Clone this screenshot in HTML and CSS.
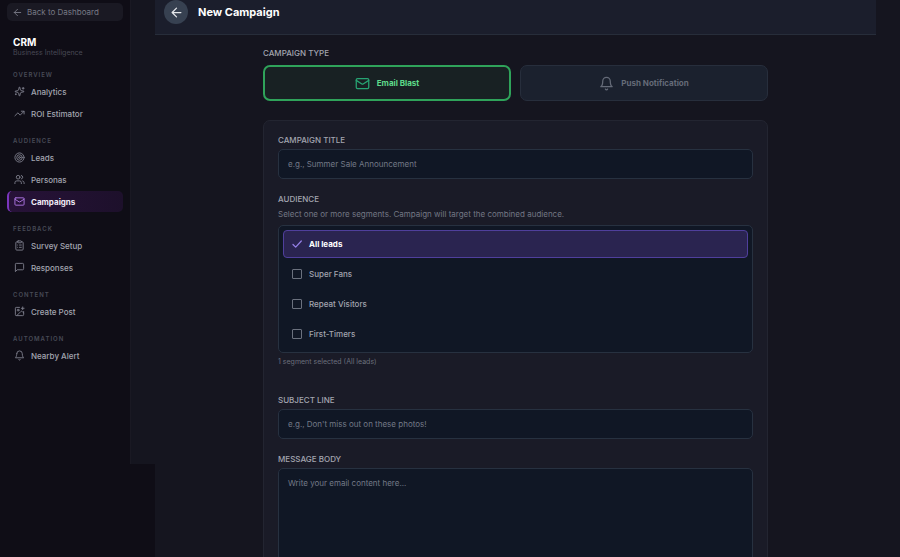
FILE: index.html
```
<!DOCTYPE html>
<html lang="en">
<head>
  <meta charset="utf-8">
  <meta name="viewport" content="width=device-width, initial-scale=1">
  <title>New Campaign</title>
  <link rel="stylesheet" href="styles.css">
</head>
<body>
  <div class="layout">
    <aside class="sidebar">
      <a class="back-link" href="#">
        <svg class="icon" viewBox="0 0 24 24"><path d="m12 19-7-7 7-7M19 12H5"/></svg>
        Back to Dashboard
      </a>
      <div class="brand">
        <div class="brand-name">CRM</div>
        <div class="brand-sub">Business Intelligence</div>
      </div>

      <nav>
        <div class="nav-section">
          <div class="nav-label">OVERVIEW</div>
          <a class="nav-item" href="#">
            <svg class="icon" viewBox="0 0 24 24"><path d="M9.94 15.5A2 2 0 0 0 8.5 14.06l-6.14-1.58a.5.5 0 0 1 0-.96L8.5 9.94A2 2 0 0 0 9.94 8.5l1.58-6.14a.5.5 0 0 1 .96 0L14.06 8.5A2 2 0 0 0 15.5 9.94l6.14 1.58a.5.5 0 0 1 0 .96L15.5 14.06a2 2 0 0 0-1.44 1.44l-1.58 6.14a.5.5 0 0 1-.96 0zM20 3v4M22 5h-4M4 17v2M5 18H3"/></svg>
            Analytics
          </a>
          <a class="nav-item" href="#">
            <svg class="icon" viewBox="0 0 24 24"><path d="m22 7-8.5 8.5-5-5L2 17M16 7h6v6"/></svg>
            ROI Estimator
          </a>
        </div>

        <div class="nav-section">
          <div class="nav-label">AUDIENCE</div>
          <a class="nav-item" href="#">
            <svg class="icon" viewBox="0 0 24 24"><circle cx="12" cy="12" r="10"/><circle cx="12" cy="12" r="6"/><circle cx="12" cy="12" r="2"/></svg>
            Leads
          </a>
          <a class="nav-item" href="#">
            <svg class="icon" viewBox="0 0 24 24"><path d="M16 21v-2a4 4 0 0 0-4-4H6a4 4 0 0 0-4 4v2M22 21v-2a4 4 0 0 0-3-3.87M16 3.13a4 4 0 0 1 0 7.75"/><circle cx="9" cy="7" r="4"/></svg>
            Personas
          </a>
          <a class="nav-item active" href="#" aria-current="page">
            <svg class="icon" viewBox="0 0 24 24"><rect x="2" y="4" width="20" height="16" rx="2"/><path d="m22 7-8.97 5.7a1.94 1.94 0 0 1-2.06 0L2 7"/></svg>
            Campaigns
          </a>
        </div>

        <div class="nav-section">
          <div class="nav-label">FEEDBACK</div>
          <a class="nav-item" href="#">
            <svg class="icon" viewBox="0 0 24 24"><rect x="8" y="2" width="8" height="4" rx="1"/><path d="M16 4h2a2 2 0 0 1 2 2v14a2 2 0 0 1-2 2H6a2 2 0 0 1-2-2V6a2 2 0 0 1 2-2h2M12 11h4M12 16h4M8 11h.01M8 16h.01"/></svg>
            Survey Setup
          </a>
          <a class="nav-item" href="#">
            <svg class="icon" viewBox="0 0 24 24"><path d="M21 15a2 2 0 0 1-2 2H7l-4 4V5a2 2 0 0 1 2-2h14a2 2 0 0 1 2 2z"/></svg>
            Responses
          </a>
        </div>

        <div class="nav-section">
          <div class="nav-label">CONTENT</div>
          <a class="nav-item" href="#">
            <svg class="icon" viewBox="0 0 24 24"><path d="M21 12v7a2 2 0 0 1-2 2H5a2 2 0 0 1-2-2V5a2 2 0 0 1 2-2h7M16 5h6M19 2v6M21 15l-3.09-3.09a2 2 0 0 0-2.82 0L6 21"/><circle cx="9" cy="9" r="2"/></svg>
            Create Post
          </a>
        </div>

        <div class="nav-section">
          <div class="nav-label">AUTOMATION</div>
          <a class="nav-item" href="#">
            <svg class="icon" viewBox="0 0 24 24"><path d="M6 8a6 6 0 0 1 12 0c0 7 3 9 3 9H3s3-2 3-9M10.3 21a1.94 1.94 0 0 0 3.4 0"/></svg>
            Nearby Alert
          </a>
        </div>
      </nav>
    </aside>

    <div class="gutter"></div>

    <main class="main">
      <header class="page-header">
        <button class="back-button" type="button" aria-label="Back">
          <svg class="icon-lg" viewBox="0 0 24 24"><path d="m12 19-7-7 7-7M19 12H5"/></svg>
        </button>
        <h1>New Campaign</h1>
      </header>

      <form class="form">
        <div class="label" id="type-label">CAMPAIGN TYPE</div>
        <div class="type-options" role="group" aria-labelledby="type-label">
          <button class="type-button selected" type="button" aria-pressed="true">
            <svg class="icon-lg" viewBox="0 0 24 24"><rect x="2" y="4" width="20" height="16" rx="2"/><path d="m22 7-8.97 5.7a1.94 1.94 0 0 1-2.06 0L2 7"/></svg>
            Email Blast
          </button>
          <button class="type-button" type="button" aria-pressed="false">
            <svg class="icon-lg" viewBox="0 0 24 24"><path d="M6 8a6 6 0 0 1 12 0c0 7 3 9 3 9H3s3-2 3-9M10.3 21a1.94 1.94 0 0 0 3.4 0"/></svg>
            Push Notification
          </button>
        </div>

        <div class="card">
          <div class="field">
            <label class="label" for="title">CAMPAIGN TITLE</label>
            <input class="input" id="title" type="text" placeholder="e.g., Summer Sale Announcement">
          </div>

          <div class="field audience" role="group" aria-labelledby="audience-label">
            <div class="label" id="audience-label">AUDIENCE</div>
            <p class="hint">Select one or more segments. Campaign will target the combined audience.</p>
            <div class="segments">
              <label class="segment selected"><input type="checkbox" checked>All leads</label>
              <label class="segment"><input type="checkbox">Super Fans</label>
              <label class="segment"><input type="checkbox">Repeat Visitors</label>
              <label class="segment"><input type="checkbox">First-Timers</label>
            </div>
            <p class="summary">1 segment selected (All leads)</p>
          </div>

          <div class="field">
            <label class="label" for="subject">SUBJECT LINE</label>
            <input class="input" id="subject" type="text" placeholder="e.g., Don't miss out on these photos!">
          </div>

          <div class="field">
            <label class="label" for="body">MESSAGE BODY</label>
            <textarea class="input" id="body" rows="12" placeholder="Write your email content here..."></textarea>
          </div>
        </div>
      </form>
    </main>
  </div>
</body>
</html>
```
FILE: styles.css
```
* {
  box-sizing: border-box;
}

html {
  scrollbar-width: none;
}

body {
  margin: 0;
  background: #0f0d16;
  color: #a3a5b0;
  font-family: Inter, "Liberation Sans", sans-serif;
  font-size: 8px;
  line-height: 12px;
}

a {
  color: inherit;
  text-decoration: none;
}

button,
input,
textarea {
  font: inherit;
}

p {
  margin: 0;
}

svg {
  fill: none;
  stroke: currentColor;
  stroke-width: 2;
  stroke-linecap: round;
  stroke-linejoin: round;
  flex-shrink: 0;
}

.icon {
  width: 11px;
  height: 11px;
}

.icon-lg {
  width: 15px;
  height: 15px;
}

.layout {
  display: flex;
  align-items: flex-start;
}

/* Sidebar */
.sidebar {
  width: 131px;
  min-height: 464px;
  padding: 3px 7px 0;
  border-right: 1px solid #1a1923;
  flex-shrink: 0;
}

.back-link {
  display: flex;
  align-items: center;
  gap: 4px;
  height: 18px;
  padding: 0 5px;
  border-radius: 5px;
  background: #1a1923;
  color: #787985;
}

.brand {
  padding: 15px 6px 0;
}

.brand-name {
  color: #fff;
  font-size: 10px;
  font-weight: 700;
}

.brand-sub {
  color: #484955;
  font-size: 7px;
  line-height: 10px;
}

nav {
  padding-top: 12px;
}

.nav-section {
  display: flex;
  flex-direction: column;
  gap: 1px;
  margin-bottom: 12px;
}

.nav-label {
  padding: 0 6px;
  color: #484b57;
  font-size: 6px;
  font-weight: 600;
  line-height: 10px;
  letter-spacing: 1px;
}

.nav-item {
  display: flex;
  align-items: center;
  gap: 6px;
  height: 21px;
  padding: 0 7px;
  border-radius: 5px;
  font-weight: 500;
}

.nav-item .icon {
  color: #7e7f8c;
}

.nav-item.active {
  padding-left: 5px;
  border-left: 2px solid #7a35bd;
  background: linear-gradient(90deg, #271238, #1d102b);
  color: #f0ebf7;
  font-weight: 700;
}

.nav-item.active .icon {
  color: #b077e6;
}

/* Main column */
.gutter {
  width: 24px;
  min-height: 464px;
  background: #15151f;
  flex-shrink: 0;
}

.main {
  flex: 1;
  min-width: 0;
  min-height: 100vh;
  padding-right: 24px;
  background: #15151f;
}

.page-header {
  display: flex;
  align-items: center;
  gap: 10px;
  padding: 0 9px 10px;
  border-bottom: 1px solid #272d3a;
  background: #1b1e2c;
}

.page-header h1 {
  margin: 0;
  color: #fff;
  font-size: 11px;
  font-weight: 700;
}

.back-button {
  display: flex;
  align-items: center;
  justify-content: center;
  width: 24px;
  height: 24px;
  padding: 0;
  border: 0;
  border-radius: 50%;
  background: #374151;
  color: #e5e7eb;
}

.form {
  max-width: 505px;
  margin: 0 auto;
  padding-top: 12px;
}

.label {
  display: block;
  color: #a3a5b0;
  font-weight: 500;
}

.type-options {
  display: grid;
  grid-template-columns: 1fr 1fr;
  gap: 9px;
  margin: 6px 0 19px;
}

.type-button {
  display: flex;
  align-items: center;
  justify-content: center;
  gap: 7px;
  height: 36px;
  border: 1px solid #272e3c;
  border-radius: 7px;
  background: #1b212e;
  color: #656b78;
  font-weight: 700;
}

.type-button.selected {
  border: 2px solid #2fa35a;
  background: #182123;
  color: #5edb8b;
}

.type-button.selected .icon-lg {
  color: #27a473;
}

.card {
  display: flex;
  flex-direction: column;
  gap: 14px;
  padding: 13px 14px;
  border: 1px solid #232531;
  border-radius: 7px;
  background: #1a1b27;
}

.input {
  display: block;
  width: 100%;
  height: 30px;
  margin-top: 3px;
  padding: 0 9px;
  border: 1px solid #273140;
  border-radius: 5px;
  outline: none;
  background: #101725;
  color: #e5e7eb;
}

.input::placeholder {
  color: #737987;
}

textarea.input {
  height: auto;
  padding-top: 8px;
  resize: none;
}

.audience {
  margin-bottom: 13px;
}

.hint {
  margin: 3px 0 5px;
  color: #737784;
}

.segments {
  display: flex;
  flex-direction: column;
  gap: 2px;
  padding: 4px;
  border: 1px solid #273140;
  border-radius: 5px;
  background: #101725;
}

.segment {
  display: flex;
  align-items: center;
  gap: 7px;
  height: 28px;
  padding: 0 8px;
  border: 1px solid transparent;
  border-radius: 4px;
  font-weight: 500;
}

.segment.selected {
  border-color: #4f3f9c;
  background: #2a2450;
  color: #fff;
  font-weight: 700;
}

.segment input {
  appearance: none;
  width: 10px;
  height: 10px;
  margin: 0;
  border: 1px solid #6b717e;
  border-radius: 1px;
}

.segment input:checked {
  border: 0;
  background: url("data:image/svg+xml,%3Csvg xmlns='http://www.w3.org/2000/svg' viewBox='0 0 10 10' fill='none' stroke='%239580e8' stroke-width='1.2' stroke-linecap='round' stroke-linejoin='round'%3E%3Cpath d='M1 5.5 3.7 8.2 9.3 2'/%3E%3C/svg%3E") center / contain no-repeat;
}

.summary {
  margin-top: 3px;
  color: #6b6f7c;
  font-size: 7px;
  line-height: 11px;
}
```
